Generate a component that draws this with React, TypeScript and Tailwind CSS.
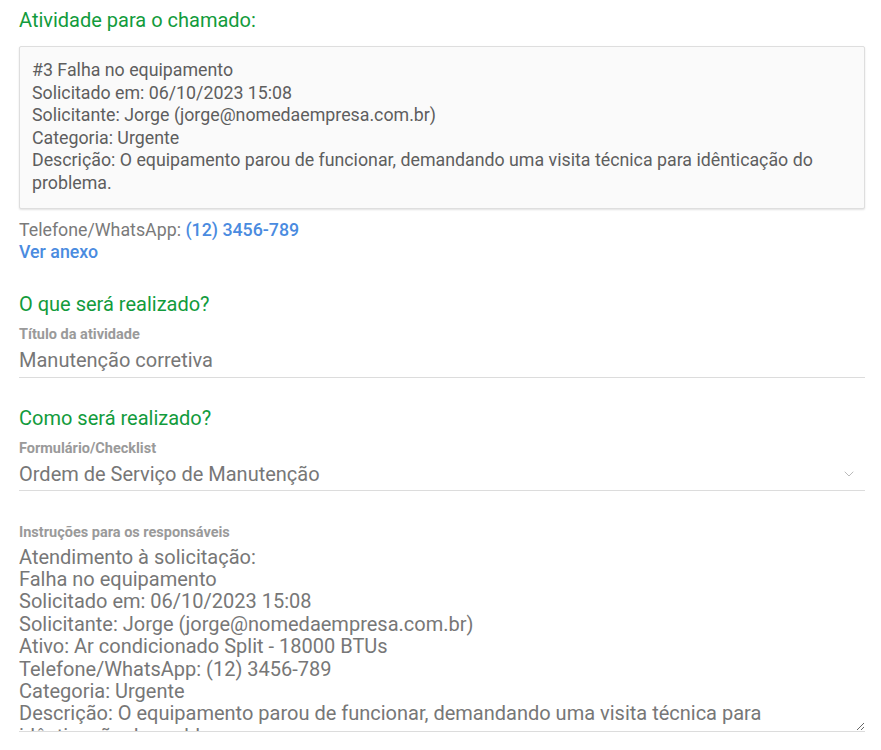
import { ChevronDown } from "lucide-react";

const instrucoes = `Atendimento à solicitação:
Falha no equipamento
Solicitado em: 06/10/2023 15:08
Solicitante: Jorge (jorge@nomedaempresa.com.br)
Ativo: Ar condicionado Split - 18000 BTUs
Telefone/WhatsApp: (12) 3456-789
Categoria: Urgente
Descrição: O equipamento parou de funcionar, demandando uma visita técnica para idênticação do problema.`;

function SectionTitle({ children, className = "" }: { children: React.ReactNode; className?: string }) {
  return <h2 className={`text-[20px] leading-6 text-[#129b3c] ${className}`}>{children}</h2>;
}

function Label({ children, className = "" }: { children: React.ReactNode; className?: string }) {
  return <div className={`text-[14.5px] leading-[18px] font-bold text-[#9a9a9a] ${className}`}>{children}</div>;
}

export default function App() {
  return (
    <div className="bg-white min-h-[750px] pl-[19px] pr-[16px] pt-2 font-['Roboto',sans-serif]">
      <SectionTitle>Atividade para o chamado:</SectionTitle>

      <div className="mt-[14px] bg-[#fafafa] border border-[#dedede] rounded-[2px] shadow-[0_1px_2px_rgba(0,0,0,0.12)] pl-[12px] pr-4 pt-3 pb-[13px] text-[17.8px] leading-[22.6px] text-[#5e5e5e]">
        <div>#3 Falha no equipamento</div>
        <div>Solicitado em: 06/10/2023 15:08</div>
        <div>Solicitante: Jorge (jorge@nomedaempresa.com.br)</div>
        <div>Categoria: Urgente</div>
        <div>
          Descrição: O equipamento parou de funcionar, demandando uma visita técnica para idênticação do problema.
        </div>
      </div>

      <div className="mt-[10px] text-[17.8px] leading-[22px] text-[#7a7a7a]">
        Telefone/WhatsApp: <span className="font-medium text-[#4a8be0]">(12) 3456-789</span>
      </div>
      <a href="#" className="block text-[17.8px] leading-[22px] font-medium text-[#4a8be0]">
        Ver anexo
      </a>

      <SectionTitle className="mt-[29px]">O que será realizado?</SectionTitle>
      <Label className="mt-[10px]">Título da atividade</Label>
      <div className="mt-[4px] pb-[5px] border-b border-[#dcdcdc] text-[20px] leading-6 text-[#777]">
        Manutenção corretiva
      </div>

      <SectionTitle className="mt-[28px]">Como será realizado?</SectionTitle>
      <Label className="mt-[10px]">Formulário/Checklist</Label>
      <div className="mt-[4px] pb-[4px] border-b border-[#dcdcdc] text-[20px] leading-6 text-[#777] flex items-center justify-between">
        <span>Ordem de Serviço de Manutenção</span>
        <ChevronDown className="w-4 h-4 mr-[8px] text-[#bbb]" strokeWidth={1.5} />
      </div>

      <Label className="mt-[33px]">Instruções para os responsáveis</Label>
      <textarea
        readOnly
        value={instrucoes}
        className="mt-[4px] block w-full h-[186px] resize-y overflow-hidden border-0 border-b border-[#dcdcdc] outline-none bg-white p-0 text-[20px] leading-[22.4px] text-[#777] font-['Roboto',sans-serif]"
      />
    </div>
  );
}
